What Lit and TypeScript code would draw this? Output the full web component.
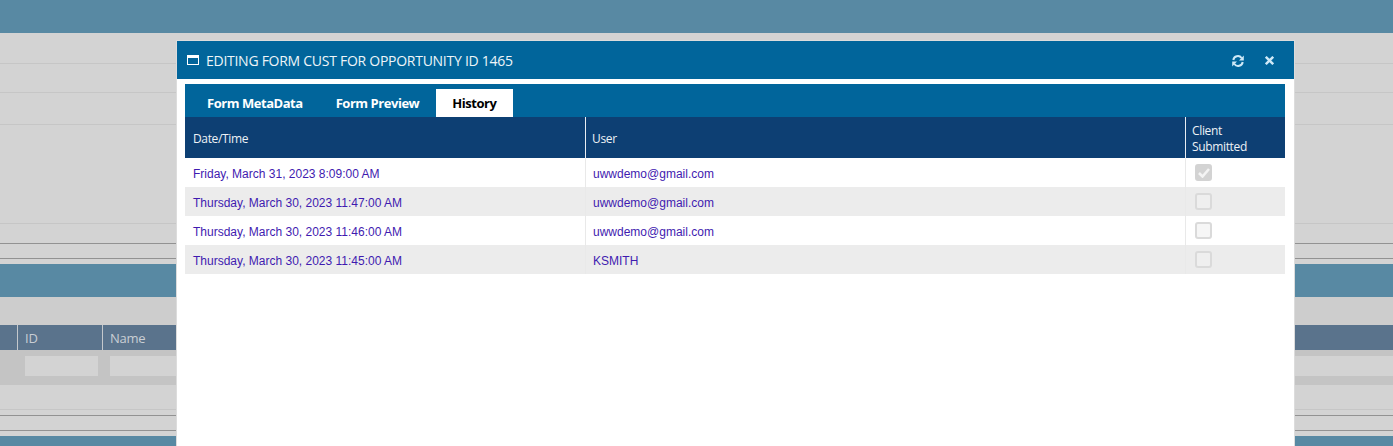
import { LitElement, html, css } from "lit";
import { customElement } from "lit/decorators.js";

const rows = [
  { d: "Friday, March 31, 2023 8:09:00 AM", u: "uwwdemo@gmail.com", c: true },
  { d: "Thursday, March 30, 2023 11:47:00 AM", u: "uwwdemo@gmail.com", c: false },
  { d: "Thursday, March 30, 2023 11:46:00 AM", u: "uwwdemo@gmail.com", c: false },
  { d: "Thursday, March 30, 2023 11:45:00 AM", u: "KSMITH", c: false },
];

@customElement("app-root")
export class AppRoot extends LitElement {
  static styles = css`
    :host { display: block; position: relative; width: 1393px; height: 446px; overflow: hidden; background: #d3d3d3; font-family: "Open Sans", sans-serif; }
    .bg { display: flex; flex-direction: column; height: 446px; }
    .teal { background: #5889a3; flex: none; }
    .top { height: 33px; }
    .l { flex: none; height: 1px; background: #c6c6c6; }
    .d { flex: none; height: 1px; background: #929292; }
    .sp { flex: none; }
    .band { flex: none; height: 28px; background: #cdcdcd; }
    .hdr { flex: none; height: 25px; background: #5a738c; display: flex; color: #c9ced4; font-size: 13px; letter-spacing: -0.25px; align-items: center; }
    .hdr div { height: 100%; display: flex; align-items: center; box-sizing: border-box; border-right: 1px solid #c4c8cc; padding-left: 7px; }
    .filter { flex: none; height: 20px; padding: 6px 0 9px; background: #c4c4c4; display: flex; }
    .filter i { display: block; height: 20px; background: #d3d3d3; }
    .modal { position: absolute; left: 177px; top: 41px; width: 1117px; height: 420px; background: #fff; box-shadow: 0 0 0 1px #dcdcdc; }
    .title { height: 38px; background: #01659b; display: flex; align-items: center; padding: 0 20px 0 10px; color: #eef5f9; font-size: 14px; letter-spacing: -0.27px; }
    .title svg.win { margin-right: 7px; flex: none; }
    .title span { flex: 1; }
    .act { display: flex; gap: 21px; align-items: center; color: #cfe9f7; padding-top: 1px; }
    .tabs { margin: 5px 9px 0 8px; height: 33px; background: #01659b; display: flex; align-items: flex-end; padding-left: 5px; }
    .tab { height: 28px; padding: 0 17px; display: flex; align-items: center; color: #fff; font-weight: 700; font-size: 13px; letter-spacing: -0.46px; }
    .tab + .tab { margin-left: -1px; }
    .tab.on { background: #fff; color: #000; padding: 0 17px 0 16px; margin-left: 0; }
    .table { margin: 0 9px 0 8px; }
    .row { display: grid; grid-template-columns: 401px 600px 99px; height: 29px; font-family: "Liberation Sans", Arial, sans-serif; font-size: 12px; color: #3f1bb0; }
    .row.alt { background: #ececec; }
    .row > div { display: flex; align-items: center; box-sizing: border-box; padding: 2px 0 0 8px; border-right: 1px solid #e9e9e9; }
    .row > div + div { padding-left: 7px; }
    .row > div:last-child { border-right: 0; padding: 0 0 0 9px; }
    .head { height: 41px; background: #0d3f73; color: #eef2f6; font-family: "Open Sans", sans-serif; letter-spacing: -0.35px; }
    .head > div { border-right-color: #e8edf2; }
    .head > div + div { padding-left: 6px; }
    .head > div:last-child { line-height: 16px; padding: 2px 0 0 6px; }
    .cb { width: 17px; height: 17px; box-sizing: border-box; border: 2px solid #dadada; border-radius: 3px; background: #f6f6f6; display: flex; align-items: center; justify-content: center; }
    .alt .cb { background: #efefef; }
    .cb.on { background: #d3d3d3; border-color: #d3d3d3; }
  `;

  render() {
    return html`
      <div class="bg">
        <div class="teal top"></div>
        <div class="sp" style="height:30px"></div><div class="l"></div>
        <div class="sp" style="height:28px"></div><div class="l"></div>
        <div class="sp" style="height:31px"></div><div class="l"></div>
        <div class="sp" style="height:98px"></div><div class="l"></div>
        <div class="sp" style="height:19px"></div><div class="d"></div>
        <div class="sp" style="height:14px"></div><div class="d"></div>
        <div class="sp" style="height:5px"></div>
        <div class="teal" style="height:33px"></div>
        <div class="band"></div>
        <div class="hdr">
          <div style="width:18px;padding:0"></div>
          <div style="width:85px">ID</div>
          <div style="flex:1;border:0">Name</div>
        </div>
        <div class="filter">
          <i style="width:73px;margin-left:25px"></i>
          <i style="flex:1;margin-left:12px"></i>
        </div>
        <div class="sp" style="height:24px"></div><div class="l"></div>
        <div class="sp" style="height:5px"></div><div class="d"></div>
        <div class="sp" style="height:14px"></div><div class="d"></div>
        <div class="sp" style="height:5px"></div>
        <div class="teal" style="height:10px"></div>
      </div>

      <div class="modal">
        <div class="title">
          <svg class="win" width="12" height="10" viewBox="0 0 12 10"><path fill="#fff" fill-rule="evenodd" d="M0 0h12v10H0zM1 3v6h10V3z"/></svg>
          <span>EDITING FORM CUST FOR OPPORTUNITY ID 1465</span>
          <div class="act">
            <svg width="12" height="12" viewBox="0 0 12 12" fill="none" stroke="currentColor" stroke-width="2"><path d="M1.3 5A4.6 4.6 0 0 1 9.6 3"/><path d="M10.7 7A4.6 4.6 0 0 1 2.4 9"/><path fill="currentColor" stroke="none" d="M11.8 .6v4.8H7zM.2 11.4V6.6h4.8z"/></svg>
            <svg width="9" height="9" viewBox="0 0 9 9" stroke="currentColor" stroke-width="2.4"><path d="M.8 .8l7.4 7.4M8.2 .8L.8 8.2"/></svg>
          </div>
        </div>
        <div class="tabs">
          <div class="tab">Form MetaData</div>
          <div class="tab">Form Preview</div>
          <div class="tab on">History</div>
        </div>
        <div class="table">
          <div class="row head"><div>Date/Time</div><div>User</div><div>Client<br />Submitted</div></div>
          ${rows.map((r, i) => html`
            <div class="row ${i % 2 ? "alt" : ""}">
              <div>${r.d}</div><div>${r.u}</div>
              <div><span class="cb ${r.c ? "on" : ""}">${r.c ? html`<svg width="12" height="10" viewBox="0 0 12 10" fill="none" stroke="#f4f4f4" stroke-width="2.6"><path d="M1 5l3.5 3.5L11 1"/></svg>` : ""}</span></div>
            </div>`)}
        </div>
      </div>
    `;
  }
}
